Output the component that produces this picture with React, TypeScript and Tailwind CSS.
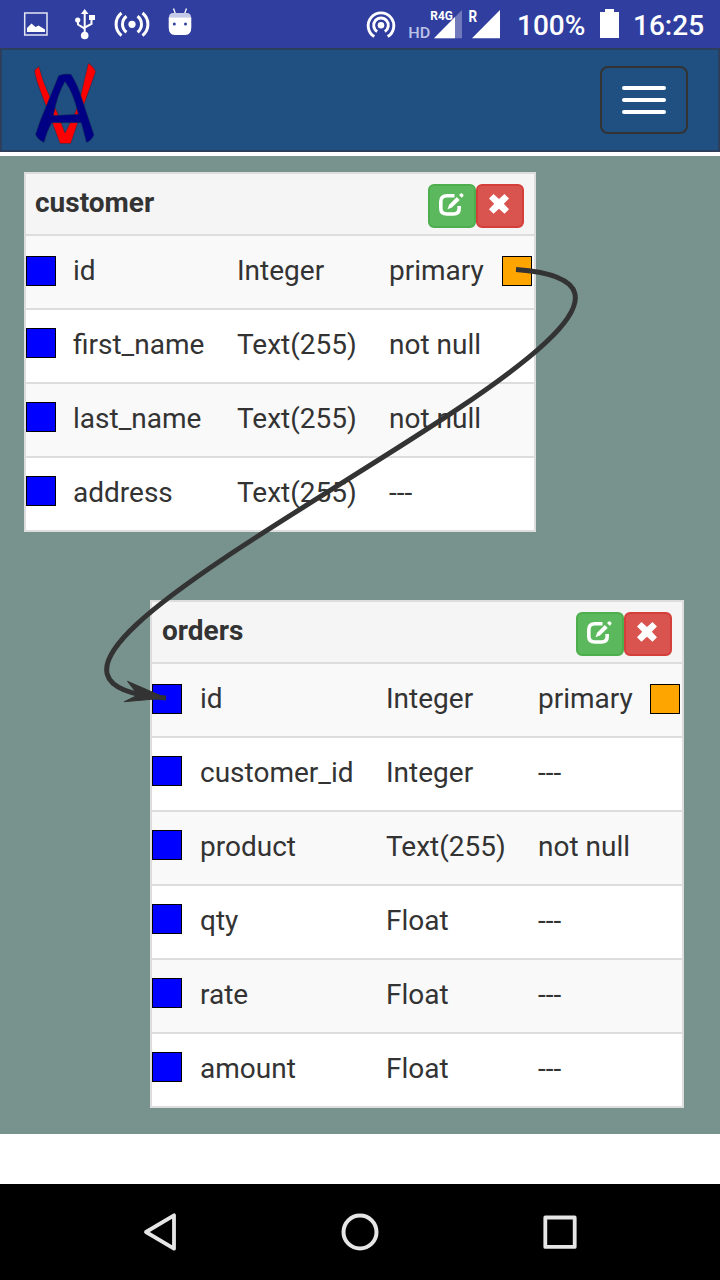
type Column = { name: string; type: string; rule: string; primary?: boolean };

const customer: Column[] = [
  { name: "id", type: "Integer", rule: "primary", primary: true },
  { name: "first_name", type: "Text(255)", rule: "not null" },
  { name: "last_name", type: "Text(255)", rule: "not null" },
  { name: "address", type: "Text(255)", rule: "---" },
];

const orders: Column[] = [
  { name: "id", type: "Integer", rule: "primary", primary: true },
  { name: "customer_id", type: "Integer", rule: "---" },
  { name: "product", type: "Text(255)", rule: "not null" },
  { name: "qty", type: "Float", rule: "---" },
  { name: "rate", type: "Float", rule: "---" },
  { name: "amount", type: "Float", rule: "---" },
];

function StatusBar() {
  return (
    <div className="flex h-12 items-center bg-[#303f9f] text-white">
      <svg className="h-12 w-[220px] shrink-0" viewBox="0 0 220 48" fill="none">
        <rect x="24.7" y="13" width="22.3" height="22" stroke="#e4e6f4" strokeWidth="1.5" />
        <path d="M27 32v-4l4.500-4.500 4 3.500 3-1.500 6.500 4V32z" fill="#fff" />
        <path d="M84.700 13v22M78 20v4.500l6.700 4.200M91.500 18v6l-6.800 3.500" stroke="#fff" strokeWidth="2" />
        <path d="M84.700 9l3.800 5h-7.600zM89 15h6v5h-6z" fill="#fff" />
        <circle cx="77.700" cy="20" r="2.600" fill="#fff" />
        <circle cx="84.700" cy="35.500" r="3.800" fill="#fff" />
        <circle cx="132" cy="24.300" r="3.600" fill="#fff" />
        <path d="M126.500 16.300a10 10 0 0 0 0 16M137.500 16.300a10 10 0 0 1 0 16M121.500 13a14.500 14.500 0 0 0 0 22.600M142.500 13a14.500 14.500 0 0 1 0 22.600" stroke="#fff" strokeWidth="3" />
        <path d="M173.500 8.500l2 5.500M186.500 8.500l-2 5.500" stroke="#fff" strokeWidth="1.300" />
        <path d="M169 17.500q0-4.500 4-4.500h14q4 0 4 4.500z" fill="#c5cae9" />
        <path d="M168.700 17.300h22.600v10q0 7.500-6 7.700h-10.600q-6-.2-6-7.700z" fill="#fff" />
        <circle cx="174.300" cy="24" r="1.500" fill="#303f9f" />
        <circle cx="185.500" cy="24" r="1.500" fill="#303f9f" />
      </svg>
      <svg className="ml-auto h-12 w-[160px] shrink-0" viewBox="350 0 160 48" fill="none">
        <circle cx="381" cy="25.300" r="3.300" fill="#fff" />
        <path d="M377.200 31.500a7.300 7.300 0 1 1 7.600 0M374.300 36.600a12.800 12.800 0 1 1 13.400 0" stroke="#fff" strokeWidth="2.900" />
        <path d="M434 38.300L462 10v28.300z" fill="#7079bc" />
        <path d="M434 38.300L455 17v21.300z" fill="#fff" />
        <path d="M472 38.300L500 10v28.300z" fill="#fff" />
        <text x="408.300" y="37.700" fill="#bcc2e6" fontFamily="Roboto, sans-serif" fontSize="15" fontWeight="500" textLength="22" lengthAdjust="spacingAndGlyphs">HD</text>
        <text x="430.300" y="20.300" fill="#fff" fontFamily="Roboto, sans-serif" fontSize="13" fontWeight="700" textLength="22.500" lengthAdjust="spacingAndGlyphs">R4G</text>
        <text x="468.600" y="22.300" fill="#fff" fontFamily="Roboto, sans-serif" fontSize="16" fontWeight="700" textLength="8.600" lengthAdjust="spacingAndGlyphs">R</text>
      </svg>
      <span className="w-[90px] pt-1 pl-[7px] text-[28px] leading-none font-medium">100%</span>
      <svg className="h-12 w-5 shrink-0" viewBox="600 0 20 48">
        <path d="M600 12h5V9h9v3h5v26h-19z" fill="#fff" />
      </svg>
      <span className="w-[100px] pt-1 pl-[13px] text-[28px] leading-none font-medium">16:25</span>
    </div>
  );
}

function Logo() {
  return (
    <svg className="h-[84px] w-[70px]" viewBox="30 58 70 84" overflow="visible">
      <g stroke="#142f50" strokeOpacity=".5" strokeWidth="1" strokeLinejoin="round">
        <path d="M39 66.500L34.700 70Q34 76 45.700 105L60 143.500h10.700L85 101.700 95.700 71.500Q92.500 65 88.300 63.300L80 98 75 113 65 133 57.700 113.300 50 96.700Q43 83 39 66.500z" fill="#ff0000" />
        <path d="M58.700 75.500Q65 73.500 71 74.300 78 85 81.700 98.300L94 135Q91 141 86.500 142.500L81.300 122.700H51.700Q47 131 44 142.500 38 140 35.500 134.500 40 120 46.700 105zM65 81.500Q57.500 94 53.300 115.500L78.300 114.300Q73.500 93 65 81.500z" fill="#000085" fillRule="evenodd" />
      </g>
    </svg>
  );
}

function NavBar() {
  return (
    <header className="flex h-[104px] items-center justify-between border-2 border-[#2c3e5a] bg-[#205081] pr-[30px] pl-7">
      <Logo />
      <button className="flex h-[68px] w-[88px] flex-col items-center justify-center gap-2 rounded-lg border-2 border-[#333]">
        <span className="h-1 w-11 rounded-[2px] bg-white" />
        <span className="h-1 w-11 rounded-[2px] bg-white" />
        <span className="h-1 w-11 rounded-[2px] bg-white" />
      </button>
    </header>
  );
}

type EntityTableProps = { title: string; columns: Column[]; grid: string; inset: string };

function EntityTable({ title, columns, grid, inset }: EntityTableProps) {
  return (
    <section className="border-2 border-[#ddd] bg-white text-[28px] leading-10 text-[#333]">
      <div className={`flex h-[60px] items-start justify-between bg-[#f5f5f5] pr-2.5 ${inset}`}>
        <h2 className="pt-[9px] font-bold">{title}</h2>
        <div className="flex pt-2.5">
          <button className="h-11 w-12 rounded-md border-2 border-[#4cae4c] bg-[#5cb85c]">
            <svg className="block h-10 w-11" viewBox="2 2 44 40" fill="none">
              <path d="M26.500 11.800H19q-6.200 0-6.200 6v6.500q0 5.700 6.200 5.700h6.500q5.700 0 5.700-5.700V22" stroke="#fff" strokeWidth="3.600" />
              <path d="M19.500 25.200l1.600-4.400L28.800 13.100l2.900 2.900-7.800 7.600zM31 11l1.700-1.500q.9-.7 1.800.2l.7.700q.8.900 0 1.800L33.700 13.800z" fill="#fff" />
            </svg>
          </button>
          <button className="h-11 w-12 rounded-md border-2 border-[#d43f3a] bg-[#d9534f]">
            <svg className="block h-10 w-11" viewBox="2 2 44 40">
              <path d="M17.500 10l5.500 5 5.500-5 4.500 4.500-5.200 5.300 5.200 5.400-4.500 4.500-5.500-5-5.500 5-4.500-4.500 5.200-5.400-5.200-5.300z" fill="#fff" />
            </svg>
          </button>
        </div>
      </div>
      {columns.map((c) => (
        <div key={c.name} className={`grid h-[74px] border-t-2 border-[#ddd] odd:bg-white even:bg-[#f9f9f9] ${grid}`}>
          <span className={`size-[30px] border border-black bg-[#0000ff] ${c.primary ? "mt-5" : "mt-[18px]"}`} />
          <span className="pt-[15px]">{c.name}</span>
          <span className="pt-[15px]">{c.type}</span>
          <span className="pt-[15px]">{c.rule}</span>
          {c.primary && <span className="mt-5 size-[30px] border border-black bg-[#ffa500]" />}
        </div>
      ))}
    </section>
  );
}

export default function App() {
  return (
    <div className="flex h-[1280px] w-[720px] flex-col overflow-hidden bg-white font-['Roboto',sans-serif]">
      <StatusBar />
      <NavBar />
      <main className="relative mt-1 h-[978px] bg-[#78928e]">
        <div className="absolute top-4 left-6 w-[512px]">
          <EntityTable title="customer" columns={customer} inset="pl-[9px]" grid="grid-cols-[47px_164px_152px_113px_30px]" />
        </div>
        <div className="absolute top-[444px] left-[150px] w-[534px]">
          <EntityTable title="orders" columns={orders} inset="pl-2.5" grid="grid-cols-[48px_186px_152px_112px_30px]" />
        </div>
        <svg className="pointer-events-none absolute inset-0 h-full w-full" viewBox="0 156 720 978" fill="none">
          <path d="M516 269.500C816 291.500-134 675.500 166 698" stroke="#333" strokeWidth="5" />
          <path d="M166 698L127.500 681.300 138 695 124.300 701.700z" fill="#333" stroke="#333" strokeWidth="1" />
        </svg>
      </main>
      <nav className="mt-auto flex h-24 items-center justify-center gap-[148px] bg-black">
        <svg className="size-[52px]" viewBox="134 1206 52 52" fill="none" stroke="#e6e6e6" strokeWidth="3.800" strokeLinejoin="round">
          <path d="M146 1232L174 1215.300V1248.700z" />
        </svg>
        <svg className="size-[52px]" viewBox="334 1206 52 52" fill="none" stroke="#e6e6e6" strokeWidth="4">
          <circle cx="360" cy="1232" r="16.500" />
        </svg>
        <svg className="size-[52px]" viewBox="534 1206 52 52" fill="none" stroke="#e6e6e6" strokeWidth="3.800" strokeLinejoin="round">
          <rect x="545.300" y="1217.500" width="29.400" height="29.400" />
        </svg>
      </nav>
    </div>
  );
}
